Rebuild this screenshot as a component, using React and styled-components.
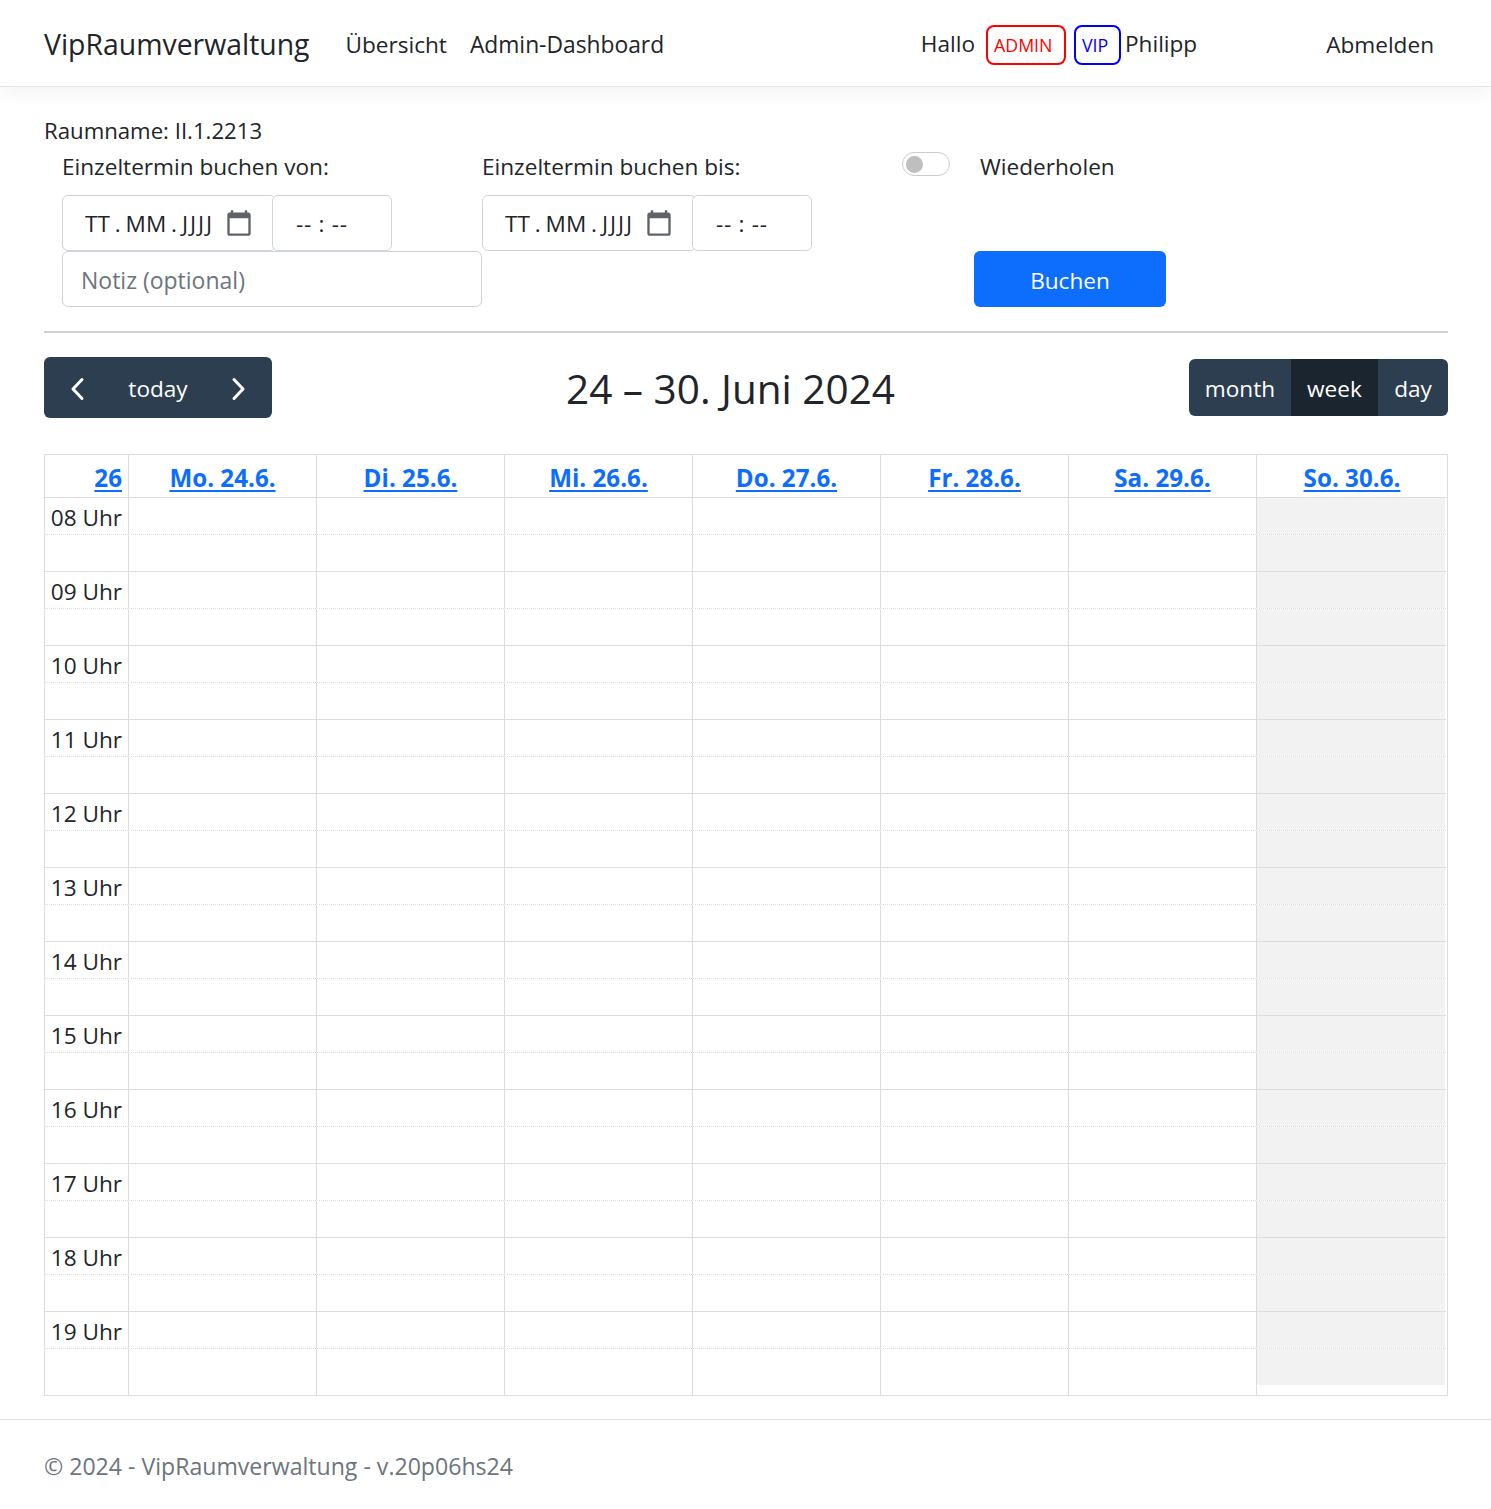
import React from "react";
import styled, { createGlobalStyle } from "styled-components";

const FONT = `"Open Sans", "Noto Sans", "Liberation Sans", sans-serif`;

const Global = createGlobalStyle`
  html, body { margin: 0; padding: 0; background: #fff; }
  body { font-family: ${FONT}; font-size: 22.6px; line-height: 36px; color: #212529; }
  * { box-sizing: border-box; }
`;

const Page = styled.div`
  width: 1491px;
  height: 1509px;
  overflow: hidden;
  display: flex;
  flex-direction: column;
`;

const Navbar = styled.nav`
  height: 87px;
  flex: none;
  display: flex;
  align-items: center;
  padding: 3px 57px 0 44px;
  background: #fff;
  border-bottom: 1px solid #e3e3ea;
  box-shadow: 0 6px 18px rgba(0, 0, 0, 0.05);
`;

const Brand = styled.a`
  font-size: 28.4px;
  margin-right: 36px;
  color: #212529;
  position: relative;
  top: -1px;
`;

const NavLink = styled.a`
  color: #212529;
  font-size: ${(p) => p.$size || 22.6}px;
  margin-right: ${(p) => p.$gap || 0}px;
`;

const UserArea = styled.div`
  display: flex;
  align-items: center;
  margin-left: auto;
  margin-right: 129px;
  margin-bottom: 2px;
`;

const Badge = styled.span`
  display: flex;
  align-items: center;
  height: 40px;
  width: ${(p) => p.$w}px;
  margin: 2px ${(p) => p.$mr}px 0 ${(p) => p.$ml}px;
  padding-left: 6px;
  border: 2px solid ${(p) => p.$color};
  border-radius: 8px;
  color: ${(p) => p.$color};
  font-size: 17.8px;
`;

const Main = styled.main`
  flex: 1;
  padding: 26px 43px 0 44px;
`;

const RoomName = styled.div`
  height: 36px;
  font-size: 22.2px;
`;

const BookingForm = styled.form`
  display: grid;
  grid-template-columns: 420px 420px 1fr;
  padding-left: 18px;
`;

const Field = styled.div`
  height: 102px;
`;

const FieldLabel = styled.div`
  height: 46px;
`;

const InputGroup = styled.div`
  display: flex;
  height: 56px;
`;

const FakeInput = styled.div`
  height: 56px;
  background: #fff;
  border: 1px solid #ced4da;
  border-radius: 6px;
  display: flex;
  align-items: center;
  position: relative;
  padding-top: 2px;
`;

const DateInput = styled(FakeInput)`
  width: 214px;
  padding-left: 22px;
`;

const DateText = styled.span`
  white-space: pre;
  word-spacing: -1px;
  width: 129px;
  flex: none;
`;

const YearPart = styled.span`
  letter-spacing: 2px;
`;

const TimeInput = styled(FakeInput)`
  width: 120px;
  margin-left: -4px;
  padding-left: 23px;
  letter-spacing: 0.7px;
`;

const CalendarIcon = styled.svg`
  width: 28px;
  height: 28px;
  margin-left: 11px;
  margin-top: -3px;
  fill: #5f6368;
  flex: none;
`;

const ToggleField = styled.div`
  display: flex;
  height: 102px;
`;

const ToggleTrack = styled.span`
  width: 48px;
  height: 24px;
  margin-top: 3px;
  border: 1px solid #ccc;
  border-radius: 12px;
  display: flex;
  align-items: center;
  padding-left: 3px;
  background: #fff;
`;

const ToggleKnob = styled.span`
  width: 17px;
  height: 17px;
  border-radius: 50%;
  background: #bfbfbf;
`;

const ToggleLabel = styled.span`
  margin-left: 30px;
`;

const NoteInput = styled.input`
  width: 420px;
  height: 56px;
  border: 1px solid #ced4da;
  border-radius: 6px;
  padding: 2px 18px 0;
  font: inherit;
  font-size: 23px;
  outline: none;
  &::placeholder { color: #6c757d; opacity: 1; }
`;

const Spacer = styled.div``;

const BookButton = styled.button`
  width: 192px;
  height: 56px;
  margin-left: 72px;
  padding: 3px 0 0;
  border: 0;
  border-radius: 6px;
  background: #0d6efd;
  color: #fff;
  font: inherit;
`;

const Rule = styled.hr`
  margin: 24px 0 0;
  border: 0;
  border-top: 2px solid #d2d2d2;
`;

const Toolbar = styled.div`
  display: flex;
  justify-content: space-between;
  align-items: center;
  height: 61px;
  margin-top: 24px;
`;

const NavGroup = styled.div`
  width: 228px;
  height: 61px;
  display: flex;
  align-items: center;
  justify-content: space-between;
  padding: 2px 23px 0;
  background: #2c3e50;
  color: #fff;
  border-radius: 6px;
`;

const Chevron = styled.svg`
  width: 20px;
  height: 24px;
  fill: none;
  stroke: #fff;
  stroke-width: 3;
  stroke-linecap: round;
  stroke-linejoin: round;
`;

const Title = styled.h2`
  margin: 2px 0 0;
  font-size: 40.5px;
  font-weight: 400;
  line-height: 48px;
`;

const ViewGroup = styled.div`
  display: flex;
  height: 57px;
  border-radius: 6px;
  overflow: hidden;
`;

const ViewButton = styled.div`
  width: ${(p) => p.$w}px;
  padding-top: 2px;
  display: flex;
  align-items: center;
  justify-content: center;
  color: #fff;
  background: ${(p) => (p.$active ? "#1a252f" : "#2c3e50")};
`;

const Calendar = styled.div`
  margin-top: 36px;
  border: 1px solid #ddd;
  width: 1404px;
`;

const COLUMNS = "83px repeat(6, 188px) 1fr";

const HeaderRow = styled.div`
  display: grid;
  grid-template-columns: ${COLUMNS};
  height: 43px;
  border-bottom: 1px solid #ddd;
`;

const HeaderCell = styled.div`
  display: flex;
  align-items: center;
  justify-content: ${(p) => (p.$axis ? "flex-end" : "center")};
  padding-right: ${(p) => (p.$axis ? "6px" : "0")};
  border-left: ${(p) => (p.$axis ? "0" : "1px solid #ddd")};
`;

const DayLink = styled.a`
  color: #0d6efd;
  font-weight: 700;
  text-decoration: underline;
  text-underline-offset: 3px;
  font-size: 24.2px;
  position: relative;
  top: 2px;
`;

const Slots = styled.div`
  display: flex;
  flex-direction: column;
`;

const SlotRow = styled.div`
  display: grid;
  grid-template-columns: ${COLUMNS};
  height: ${(p) => (p.$last ? 36 : 37)}px;
  margin-right: 1px;
  border-bottom: ${(p) => (p.$last ? "0" : `1px ${p.$half ? "solid" : "dotted"} #ddd`)};
`;

const TailRow = styled.div`
  display: grid;
  grid-template-columns: ${COLUMNS};
  height: 10px;
`;

const AxisCell = styled.div`
  text-align: right;
  padding-right: 6px;
  line-height: 40px;
  height: 36px;
`;

const SlotCell = styled.div`
  border-left: 1px solid #ddd;
  background: ${(p) => (p.$off ? "#f2f2f2" : "transparent")};
  margin-right: ${(p) => (p.$off ? "1px" : "0")};
`;

const TailCell = styled.div`
  border-left: 1px solid #ddd;
`;

const Footer = styled.footer`
  flex: none;
  height: 90px;
  padding: 28px 44px 0;
  border-top: 1px solid #ddd;
  color: #6c757d;
  font-size: 23.1px;
`;

const DAYS = ["Mo. 24.6.", "Di. 25.6.", "Mi. 26.6.", "Do. 27.6.", "Fr. 28.6.", "Sa. 29.6.", "So. 30.6."];
const HOURS = ["08", "09", "10", "11", "12", "13", "14", "15", "16", "17", "18", "19"];

const DateField = ({ label }) => (
  <Field>
    <FieldLabel>{label}</FieldLabel>
    <InputGroup>
      <DateInput>
        <DateText>TT . MM . <YearPart>JJJJ</YearPart></DateText>
        <CalendarIcon viewBox="0 0 24 24">
          <path d="M20 3h-1V1h-2v2H7V1H5v2H4c-1.1 0-2 .9-2 2v16c0 1.1.9 2 2 2h16c1.1 0 2-.9 2-2V5c0-1.1-.9-2-2-2zm0 18H4V8h16v13z" />
        </CalendarIcon>
      </DateInput>
      <TimeInput>-- : --</TimeInput>
    </InputGroup>
  </Field>
);

const Cells = () =>
  DAYS.map((d, i) => <SlotCell key={d} $off={i === 6} />);

export default function App() {
  return (
    <Page>
      <Global />
      <Navbar>
        <Brand>VipRaumverwaltung</Brand>
        <NavLink $gap={23}>Übersicht</NavLink>
        <NavLink $size={22.8}>Admin-Dashboard</NavLink>
        <UserArea>
          Hallo
          <Badge $color="#ff0000" $w={80} $ml={11} $mr={8}>ADMIN</Badge>
          <Badge $color="#0000ff" $w={47} $ml={0} $mr={4}>VIP</Badge>
          Philipp
        </UserArea>
        <NavLink>Abmelden</NavLink>
      </Navbar>
      <Main>
        <RoomName>Raumname: II.1.2213</RoomName>
        <BookingForm>
          <DateField label="Einzeltermin buchen von:" />
          <DateField label="Einzeltermin buchen bis:" />
          <ToggleField>
            <ToggleTrack><ToggleKnob /></ToggleTrack>
            <ToggleLabel>Wiederholen</ToggleLabel>
          </ToggleField>
          <NoteInput placeholder="Notiz (optional)" readOnly />
          <Spacer />
          <BookButton type="button">Buchen</BookButton>
        </BookingForm>
        <Rule />
        <Toolbar>
          <NavGroup>
            <Chevron viewBox="0 0 20 24"><polyline points="15,2.5 6,12 15,21.5" /></Chevron>
            today
            <Chevron viewBox="0 0 20 24"><polyline points="5,2.5 14,12 5,21.5" /></Chevron>
          </NavGroup>
          <Title>24 – 30. Juni 2024</Title>
          <ViewGroup>
            <ViewButton $w={102}>month</ViewButton>
            <ViewButton $w={87} $active>week</ViewButton>
            <ViewButton $w={70}>day</ViewButton>
          </ViewGroup>
        </Toolbar>
        <Calendar>
          <HeaderRow>
            <HeaderCell $axis><DayLink>26</DayLink></HeaderCell>
            {DAYS.map((d) => (
              <HeaderCell key={d}><DayLink>{d}</DayLink></HeaderCell>
            ))}
          </HeaderRow>
          <Slots>
            {HOURS.map((h, i) => (
              <React.Fragment key={h}>
                <SlotRow>
                  <AxisCell>{h} Uhr</AxisCell>
                  <Cells />
                </SlotRow>
                <SlotRow $half $last={i === HOURS.length - 1}>
                  <AxisCell />
                  <Cells />
                </SlotRow>
              </React.Fragment>
            ))}
            <TailRow>
              <span />
              {DAYS.map((d) => <TailCell key={d} />)}
            </TailRow>
          </Slots>
        </Calendar>
      </Main>
      <Footer>© 2024 - VipRaumverwaltung - v.20p06hs24</Footer>
    </Page>
  );
}
